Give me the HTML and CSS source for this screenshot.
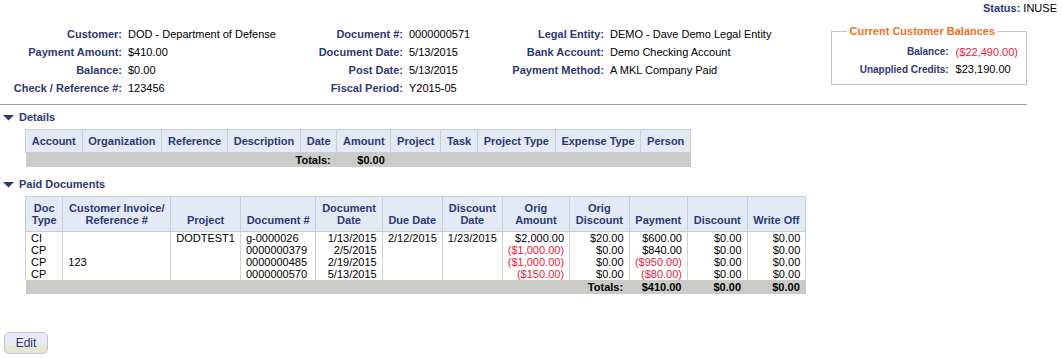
FILE: index.html
```html
<!DOCTYPE html>
<html>
<head>
    <title>Payment</title>
    <link rel="stylesheet" href="styles.css">
</head>
<body>
    <div class="status"><span class="label">Status:</span> INUSE</div>

    <div class="summary">
        <div class="fields col-1">
            <span class="label">Customer:</span><span>DOD - Department of Defense</span>
            <span class="label">Payment Amount:</span><span>$410.00</span>
            <span class="label">Balance:</span><span>$0.00</span>
            <span class="label">Check / Reference #:</span><span>123456</span>
        </div>
        <div class="fields col-2">
            <span class="label">Document #:</span><span>0000000571</span>
            <span class="label">Document Date:</span><span>5/13/2015</span>
            <span class="label">Post Date:</span><span>5/13/2015</span>
            <span class="label">Fiscal Period:</span><span>Y2015-05</span>
        </div>
        <div class="fields col-3">
            <span class="label">Legal Entity:</span><span>DEMO - Dave Demo Legal Entity</span>
            <span class="label">Bank Account:</span><span>Demo Checking Account</span>
            <span class="label">Payment Method:</span><span>A MKL Company Paid</span>
        </div>
        <fieldset class="balances">
            <legend>Current Customer Balances</legend>
            <div class="fields">
                <span class="label">Balance:</span><span class="negative">($22,490.00)</span>
                <span class="label">Unapplied Credits:</span><span>$23,190.00</span>
            </div>
        </fieldset>
    </div>

    <hr class="divider">

    <div class="section-title">
        <svg class="toggle" width="11" height="6" viewBox="0 0 11 6"><polygon points="0,0 11,0 5.5,5.5" fill="#2b3a74"/></svg>Details
    </div>
    <table class="grid">
        <thead>
            <tr>
                <th>Account</th>
                <th>Organization</th>
                <th>Reference</th>
                <th>Description</th>
                <th>Date</th>
                <th>Amount</th>
                <th>Project</th>
                <th>Task</th>
                <th>Project Type</th>
                <th>Expense Type</th>
                <th>Person</th>
            </tr>
        </thead>
        <tfoot>
            <tr>
                <td colspan="5" class="num">Totals:</td>
                <td class="num">$0.00</td>
                <td colspan="5"></td>
            </tr>
        </tfoot>
    </table>

    <div class="section-title paid-title">
        <svg class="toggle" width="11" height="6" viewBox="0 0 11 6"><polygon points="0,0 11,0 5.5,5.5" fill="#2b3a74"/></svg>Paid Documents
    </div>
    <table class="grid">
        <thead>
            <tr>
                <th>Doc<br>Type</th>
                <th>Customer Invoice/<br>Reference #</th>
                <th>Project</th>
                <th>Document #</th>
                <th>Document<br>Date</th>
                <th>Due Date</th>
                <th>Discount<br>Date</th>
                <th>Orig<br>Amount</th>
                <th>Orig<br>Discount</th>
                <th>Payment</th>
                <th>Discount</th>
                <th>Write Off</th>
            </tr>
        </thead>
        <tbody>
            <tr>
                <td>CI</td>
                <td></td>
                <td>DODTEST1</td>
                <td>g-0000026</td>
                <td class="num">1/13/2015</td>
                <td class="num">2/12/2015</td>
                <td class="num">1/23/2015</td>
                <td class="num">$2,000.00</td>
                <td class="num">$20.00</td>
                <td class="num">$600.00</td>
                <td class="num">$0.00</td>
                <td class="num">$0.00</td>
            </tr>
            <tr>
                <td>CP</td>
                <td></td>
                <td></td>
                <td>0000000379</td>
                <td class="num">2/5/2015</td>
                <td></td>
                <td></td>
                <td class="num negative">($1,000.00)</td>
                <td class="num">$0.00</td>
                <td class="num">$840.00</td>
                <td class="num">$0.00</td>
                <td class="num">$0.00</td>
            </tr>
            <tr>
                <td>CP</td>
                <td>123</td>
                <td></td>
                <td>0000000485</td>
                <td class="num">2/19/2015</td>
                <td></td>
                <td></td>
                <td class="num negative">($1,000.00)</td>
                <td class="num">$0.00</td>
                <td class="num negative">($950.00)</td>
                <td class="num">$0.00</td>
                <td class="num">$0.00</td>
            </tr>
            <tr>
                <td>CP</td>
                <td></td>
                <td></td>
                <td>0000000570</td>
                <td class="num">5/13/2015</td>
                <td></td>
                <td></td>
                <td class="num negative">($150.00)</td>
                <td class="num">$0.00</td>
                <td class="num negative">($80.00)</td>
                <td class="num">$0.00</td>
                <td class="num">$0.00</td>
            </tr>
        </tbody>
        <tfoot>
            <tr>
                <td colspan="9" class="num">Totals:</td>
                <td class="num">$410.00</td>
                <td class="num">$0.00</td>
                <td class="num">$0.00</td>
            </tr>
        </tfoot>
    </table>

    <button class="edit-button">Edit</button>
</body>
</html>
```

FILE: styles.css
```css
body {
    margin: 0;
    font-family: Arial, "Liberation Sans", sans-serif;
    font-size: 11px;
    color: #000;
    background-color: #fff;
}

.label {
    font-weight: bold;
    color: #2b3a74;
    text-align: right;
}

.negative {
    color: #f0203a;
}

.status {
    text-align: right;
    padding: 1px 6px 0 0;
    line-height: 14px;
}

.summary {
    display: flex;
    align-items: flex-start;
    width: 1027px;
    margin-top: 10px;
}

.fields {
    display: grid;
    column-gap: 6px;
    grid-auto-rows: 18px;
    align-items: center;
    white-space: nowrap;
}

.col-1 {
    width: 292px;
    margin-left: 8px;
    grid-template-columns: 114px 1fr;
}

.col-2 {
    width: 200px;
    grid-template-columns: 103px 1fr;
}

.col-3 {
    width: 280px;
    grid-template-columns: 104px 1fr;
}

.balances {
    margin: -1px 0 0 auto;
    width: 193px;
    box-sizing: border-box;
    border: 1px solid #c4c4c4;
    padding: 0 8px 6px 19px;
}

.balances legend {
    padding: 0 3px;
    margin-left: -4px;
    font-weight: bold;
    color: #f36f21;
    line-height: 14px;
}

.balances .fields {
    grid-template-columns: 98px 1fr;
    grid-auto-rows: 17.5px;
    column-gap: 7px;
    margin-top: 5px;
}

.balances .label {
    font-size: 10px;
}

.divider {
    width: 1027px;
    margin: 7px 0 0 0;
    border: none;
    border-top: 1px solid #9c9c9c;
}

.section-title {
    margin: 5px 0 0 3px;
    line-height: 14px;
    font-weight: bold;
    color: #2b3a74;
}

.section-title .toggle {
    margin-right: 5px;
}

.paid-title {
    margin-top: 10px;
}

.grid {
    margin: 5px 0 0 25px;
    border-collapse: collapse;
    white-space: nowrap;
}

.grid th {
    background-color: #e3e9f5;
    border: 1px solid #c8cdd6;
    color: #2b3a74;
    font-weight: bold;
    padding: 5px 5.75px;
    line-height: 12px;
    vertical-align: bottom;
}

.grid td {
    padding: 0 5px;
    line-height: 12px;
    border-left: 1px solid #d2d2d2;
    border-right: 1px solid #d2d2d2;
    vertical-align: top;
}

.grid td.num {
    text-align: right;
}

.grid tfoot td {
    background-color: #cbcbc7;
    border: none;
    font-weight: bold;
    line-height: 14px;
    padding: 0 6px;
}

.edit-button {
    display: block;
    margin: 38px 0 0 4px;
    width: 44px;
    height: 22px;
    padding: 0;
    border: 1px solid #c4c4c4;
    border-radius: 5px;
    background: linear-gradient(to bottom, #e5ebf7 0%, #e5ebf7 62%, #e6e6d3 62%, #e6e6d3 100%);
    color: #2d3478;
    font-family: Arial, "Liberation Sans", sans-serif;
    font-size: 12px;
    cursor: pointer;
}
```
